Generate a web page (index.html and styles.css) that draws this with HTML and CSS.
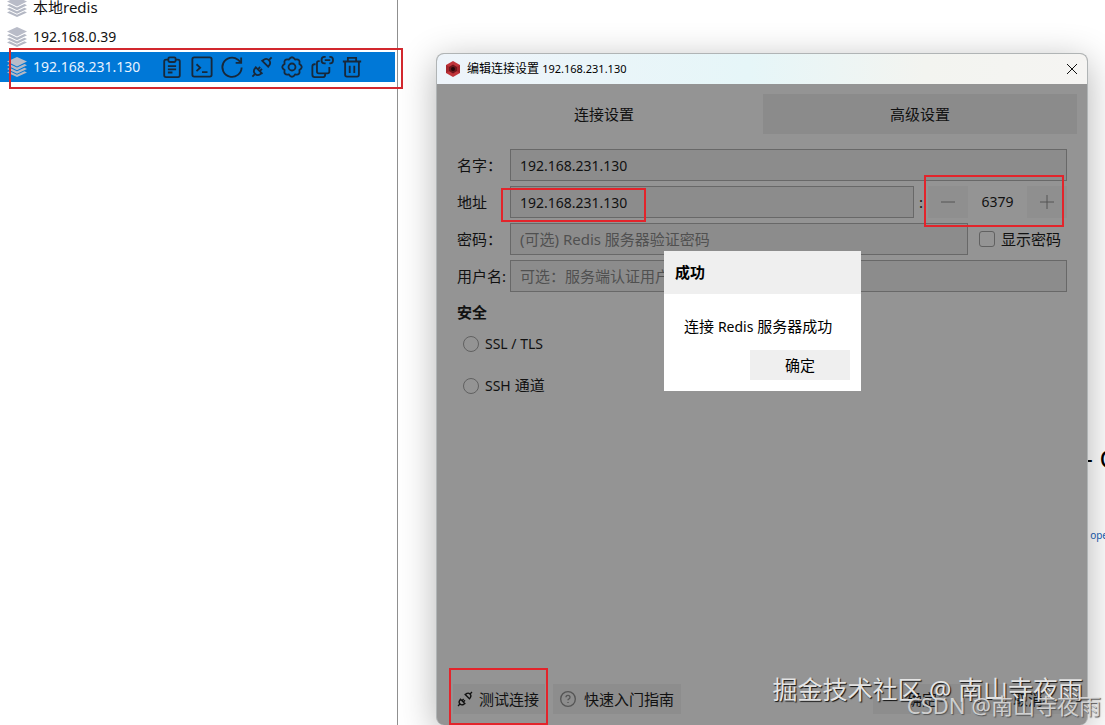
FILE: index.html
```html
<!DOCTYPE html>
<html lang="zh-CN">
<head>
<meta charset="utf-8">
<title>编辑连接设置 192.168.231.130</title>
<link rel="stylesheet" href="styles.css">
</head>
<body>
<svg class="defs" aria-hidden="true">
  <symbol id="stack" viewBox="0 0 20 20">
    <path d="M10 0 20 4.500 10 9.500 0 4.500z" fill="#b9bcc8"/>
    <path d="M0 8.200 2.500 7 10 10.500 17.500 7 20 8.200 10 13.200zM0 11.900 2.500 10.700 10 14.200l7.500-3.500L20 11.900 10 16.700zM0 15.400l2.500-1.200 7.500 3.500 7.500-3.500 2.500 1.200L10 20z" fill="#b4b8c4"/>
  </symbol>
  <symbol id="plug" viewBox="0 0 24 24">
    <path d="M1.500 22.500 4.800 19.200M19.200 4.800l3.300-3.300M4.500 11.500l8 8M19.500 12.500l-8-8M5.500 12.500 4 14q-2 3 .5 5.500T10 20l1.500-1.500M18.500 11.500 20 10q2-3-.5-5.500T14 4l-1.500 1.500M7.500 14.500l2.500-2.500M9.500 16.500l2.500-2.500"/>
  </symbol>
</svg>
<div class="desktop">
  <nav class="sidebar">
    <ul class="servers">
      <li class="server"><svg class="stack"><use href="#stack"/></svg><a class="name cjk" href="#">本地redis</a></li>
      <li class="server"><svg class="stack"><use href="#stack"/></svg><a class="name" href="#">192.168.0.39</a></li>
      <li class="server selected"><svg class="stack"><use href="#stack"/></svg><a class="name" href="#">192.168.231.130</a>
        <div class="tools">
          <button class="tool" aria-label="日志"><svg viewBox="0 0 24 24"><path d="M8 4H5.500Q3.500 4 3.500 6v15q0 2 2 2h13q2 0 2-2V6q0-2-2-2H16M9.500 1.500h5Q16 1.500 16 3v2q0 1.500-1.500 1.500h-5Q8 6.500 8 5V3q0-1.500 1.500-1.500zM7.500 11h9M7.500 14.500h9M7.500 18h5"/></svg></button>
          <button class="tool" aria-label="控制台"><svg viewBox="0 0 24 24"><rect x="1.500" y="1.500" width="21" height="21" rx="2"/><path d="M6 9l4 3.700L6 16.500M12 17.500h6"/></svg></button>
          <button class="tool" aria-label="刷新"><svg viewBox="0 0 24 24"><path d="M22.500 12.500A10.500 10.500 0 1 1 18.500 4l3 3M22 1.500V7.500h-6"/></svg></button>
          <button class="tool" aria-label="断开"><svg viewBox="0 0 24 24"><use href="#plug"/></svg></button>
          <button class="tool" aria-label="设置"><svg viewBox="0 0 24 24"><path d="M8.600 3.900Q12-1.200 15.400 3.900 21.300 2.700 20.100 8.600 25.200 12 20.100 15.400 21.300 21.300 15.400 20.100 12 25.200 8.600 20.100 2.700 21.300 3.900 15.400-1.200 12 3.900 8.600 2.700 2.700 8.600 3.900z"/><circle cx="12" cy="12" r="3.800"/></svg></button>
          <button class="tool" aria-label="复制"><svg viewBox="0 0 24 24"><path d="M9.500 5.500H8.500q-2 0-2 2V17q0 2 2 2H18q2 0 2-2v-5M5 9H4Q1.500 9 1.500 11.500V20.500q0 2.500 2.500 2.500h9.500Q15.500 23 15.500 20M16 1H14.500q-3 0-3 3.500t3 3.500H16M20 1h1q3 0 3 3.500T21 8h-1M15 4.500h6"/></svg></button>
          <button class="tool" aria-label="删除"><svg viewBox="0 0 24 24"><path d="M2 6h20M7.500 5.500V2h9v3.500M4.500 6v14.500q0 2 2 2h11q2 0 2-2V6M9.500 10.500v8M14.500 10.500v8"/></svg></button>
        </div>
        <span class="mark mark-row"></span>
      </li>
    </ul>
  </nav>
  <main class="backdrop">
    <p class="behind-title">- C</p>
    <a class="behind-link" href="#">ope</a>
  </main>
  <section class="window">
    <header class="titlebar">
      <svg class="logo" viewBox="0 0 16 16"><path d="M8 0l7 4v8l-7 4-7-4V4z" fill="#c1343a"/><path d="M1 4l7 4-7 4zM15 4v8L8 8z" fill="#a3262c"/><path d="M8 3.500 12 6v4l-4 2.500L4 10V6z" fill="#6d161b"/><circle cx="8" cy="8" r="2" fill="#250708"/></svg>
      <h1 class="title">编辑连接设置 <span class="title-ip">192.168.231.130</span></h1>
      <button class="close" aria-label="关闭"><svg viewBox="0 0 12 12"><path d="M1 1l10 10M11 1 1 11"/></svg></button>
    </header>
    <div class="content">
      <div class="tabs">
        <button class="tab">连接设置</button>
        <button class="tab inactive">高级设置</button>
      </div>
      <form class="form">
        <div class="row">
          <label class="label" for="name">名字：</label>
          <input class="field ip" id="name" value="192.168.231.130">
        </div>
        <div class="row">
          <label class="label" for="host">地址</label>
          <div class="host"><input class="field ip" id="host" value="192.168.231.130"><span class="mark mark-host"></span></div>
          <span class="colon">:</span>
          <div class="spin">
            <button type="button" class="step" aria-label="减少"><svg viewBox="0 0 16 16"><path d="M1 8h14"/></svg></button>
            <input class="port" aria-label="端口" value="6379">
            <button type="button" class="step" aria-label="增加"><svg viewBox="0 0 16 16"><path d="M1 8h14M8 1v14"/></svg></button>
            <span class="mark mark-port"></span>
          </div>
        </div>
        <div class="row">
          <label class="label" for="password">密码：</label>
          <input class="field" id="password" placeholder="(可选) Redis 服务器验证密码">
          <label class="show"><input class="check" type="checkbox">显示密码</label>
        </div>
        <div class="row">
          <label class="label" for="user">用户名:</label>
          <input class="field" id="user" placeholder="可选：服务端认证用户名">
        </div>
        <h2 class="heading">安全</h2>
        <label class="option"><input class="radio" type="radio" name="security"><span class="latin">SSL / TLS</span></label>
        <label class="option"><input class="radio" type="radio" name="security"><span><span class="latin">SSH</span> 通道</span></label>
      </form>
      <footer class="actions">
        <button class="action test"><svg viewBox="0 0 24 24"><use href="#plug"/></svg>测试连接<span class="mark mark-test"></span></button>
        <button class="action guide"><svg class="help" viewBox="0 0 24 24"><circle cx="12" cy="12" r="11"/><path d="M9 9.500Q9 6.500 12 6.500t3 2.800Q15 11 13.500 11.800 12 12.500 12 14M12 16.500v1.500"/></svg>快速入门指南</button>
        <button class="action ok">确定</button>
        <button class="action cancel">取消</button>
      </footer>
      <div class="dialog" role="dialog" aria-labelledby="done">
        <h2 class="dialog-title" id="done">成功</h2>
        <div class="dialog-body">
          <p class="message">连接 <span class="latin">Redis</span> 服务器成功</p>
          <button class="confirm">确定</button>
        </div>
      </div>
    </div>
  </section>
  <span class="watermark juejin">掘金技术社区 @ 南山寺夜雨</span>
  <span class="watermark csdn">CSDN @南山寺夜雨</span>
</div>
</body>
</html>
```
FILE: styles.css
```css
* { box-sizing: border-box; }
body { margin: 0; background: #fff; color: #111; font: 15px/20px "Noto Sans", "Noto Sans CJK SC", sans-serif; }
button, input { font: inherit; color: inherit; margin: 0; padding: 0; border: 0; background: none; outline: 0; }
h1, h2, p, ul { margin: 0; padding: 0; }
svg { display: block; fill: none; stroke: currentColor; stroke-width: 2; flex: none; }
.defs { position: absolute; width: 0; height: 0; }
.desktop { position: relative; display: flex; height: 100vh; min-height: 480px; overflow: hidden; }

.sidebar { flex: none; width: 398px; padding-right: 2px; border-right: 1px solid #8f8f8f; }
.servers { list-style: none; margin-top: -8px; }
.server { position: relative; display: flex; align-items: center; height: 30px; padding-left: 7px; gap: 6px; }
.stack { width: 20px; height: 20px; stroke: none; }
.name { width: 118px; font-size: 14px; color: #111; text-decoration: none; white-space: nowrap; }
.name.cjk { font-size: 15px; }
.selected { background: #0078d7; }
.selected .name { color: #e6f2ff; }
.tools { display: flex; }
.tool { width: 30px; height: 30px; display: grid; place-items: center; color: #17283a; }
.tool svg { width: 22px; height: 22px; overflow: visible; }

.mark { position: absolute; z-index: 2; border: 2px solid #e3242b; pointer-events: none; }
.mark-row { left: 9px; right: -8px; top: -4px; bottom: -7px; border-color: #d2282e; }
.mark-host { left: -9px; top: 2px; width: 145px; height: 34px; }
.mark-port { left: -4px; right: 3px; top: -11px; bottom: -9px; }
.mark-test { left: -4px; right: -3px; top: -16px; bottom: -11px; }

.backdrop { flex: 1; display: flex; flex-direction: column; align-items: flex-end; overflow: hidden; padding-top: 443px; }
.behind-title { font-size: 26px; line-height: 30px; color: #000; margin-right: -11px; }
.behind-link { margin-top: 52px; font-size: 10px; color: #1a62b5; text-decoration: none; margin-right: -3px; }

.window { position: absolute; left: 436px; right: 17px; top: 53px; bottom: 0; display: flex; flex-direction: column; border: 1px solid #b0b4b5; border-bottom: 0; border-radius: 8px; box-shadow: 0 8px 36px rgba(0, 0, 0, .3); background: #949494; }
.titlebar { flex: none; display: flex; align-items: center; height: 30px; padding: 0 9px 0 8px; border-radius: 7px 7px 0 0; background: linear-gradient(90deg, #eef4fa, #e6f6f8 48%, #f3f4f0 75%, #f5f4f2); }
.logo { width: 16px; height: 16px; stroke: none; }
.title { flex: 1; margin-left: 6px; font-size: 12px; font-weight: 400; color: #000; }
.title-ip { font-size: 11px; }
.close { display: grid; place-items: center; width: 12px; height: 12px; }
.close svg { width: 12px; height: 12px; stroke-width: 1; }
.content { position: relative; flex: 1; display: flex; flex-direction: column; padding: 10px 10px 11px 10px; }
.tabs { display: grid; grid-template-columns: 1fr 1fr; gap: 2px; }
.tab { height: 40px; }
.tab.inactive { background: #8b8b8b; }
.form { flex: 1; display: flex; flex-direction: column; gap: 5px; padding: 15px 10px 0; }
.row { display: flex; align-items: center; }
.label { flex: none; width: 53px; white-space: nowrap; }
.field { flex: 1; min-width: 0; width: 100%; height: 32px; padding: 0 9px; border: 1px solid #686868; background: #8c8c8c; }
.field.ip { font-size: 14px; }
.field::placeholder { color: #505050; opacity: 1; }
.host { position: relative; flex: 1; display: flex; }
.colon { width: 14px; text-align: center; }
.spin { position: relative; display: flex; width: 139px; height: 32px; }
.step { width: 40px; display: grid; place-items: center; background: #8f8f8f; color: #555; }
.step svg { width: 16px; height: 16px; stroke-width: 1; }
.port { width: 59px; font-size: 14px; text-align: center; }
.show { display: flex; align-items: center; gap: 6px; padding: 0 6px 0 11px; }
.check { appearance: none; width: 16px; height: 16px; border: 1px solid #616161; border-radius: 3px; }
.heading { margin-top: 5px; font-size: 15px; font-weight: 700; }
.option { display: flex; align-items: center; gap: 6px; height: 37px; padding-left: 6px; }
.heading + .option { margin-top: -2px; }
.radio { appearance: none; width: 16px; height: 16px; border: 1px solid #616161; border-radius: 50%; }
.latin { font-size: 14px; }
.actions { display: flex; gap: 8px; padding-left: 6px; }
.action { position: relative; height: 30px; background: #8d8d8d; display: flex; align-items: center; justify-content: center; gap: 8px; white-space: nowrap; }
.action svg { width: 16px; height: 16px; }
.test { width: 92px; gap: 6px; padding-right: 2px; }
.guide { width: 128px; }
.action .help { color: #555; }
.ok { width: 98px; margin-left: auto; }
.cancel { width: 98px; }

.dialog { position: absolute; z-index: 3; top: 167px; left: 50%; width: 197px; margin-left: -98px; background: #fff; }
.dialog-title { height: 43px; padding-left: 11px; font-size: 15px; line-height: 43px; color: #000; background: #efefef; }
.dialog-body { padding: 22px 11px 11px; }
.message { padding-left: 9px; color: #000; white-space: nowrap; }
.confirm { display: block; width: 100px; height: 30px; margin: 13px 0 0 auto; background: #efefef; color: #000; }

.watermark { position: absolute; z-index: 4; white-space: nowrap; pointer-events: none; }
.juejin { right: 22px; bottom: 20px; font-size: 25px; line-height: 32px; color: #e4e4e4; text-shadow: 1px 1px 1px #111; }
.csdn { right: 4px; bottom: 5px; font-size: 22px; line-height: 30px; color: rgba(225, 225, 225, .85); text-shadow: 1px 1px 1px #555; }
```
